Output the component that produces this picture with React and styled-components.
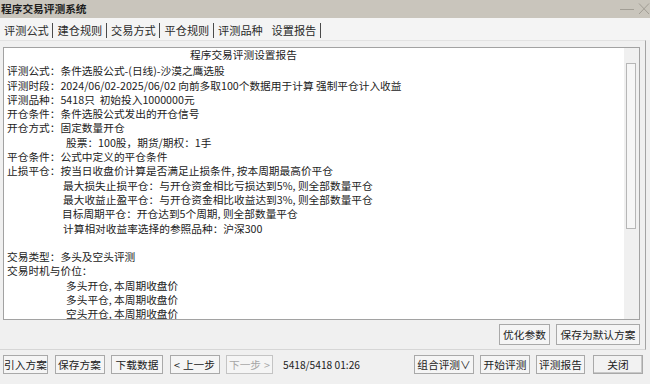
import React from "react";
import styled, { createGlobalStyle } from "styled-components";

const GlobalStyle = createGlobalStyle`
  html, body {
    margin: 0;
    padding: 0;
    background: #f0f0f0;
  }
  body {
    font-family: "Noto Sans CJK SC", "Liberation Sans", sans-serif;
  }
`;

const Window = styled.div`
  width: 650px;
  height: 384px;
  display: flex;
  flex-direction: column;
  overflow: hidden;
  background: #f0f0f0;
  color: #1e1e1e;
  font-size: 10.7px;
`;

const TitleBar = styled.div`
  height: 18px;
  flex: none;
  display: flex;
  align-items: center;
  justify-content: space-between;
  background: #c9c5bc;
  padding-left: 1px;
`;

const Title = styled.span`
  font-weight: bold;
  line-height: 18px;
  color: #1c1c1c;
`;

const TabBar = styled.div`
  height: 22px;
  flex: none;
  display: flex;
  align-items: center;
  padding-left: 4px;
  background: #f4f4f4;
  font-size: 11.2px;
  color: #2a2a2a;
`;

const Tab = styled.span`
  width: 49px;
  height: 15px;
  line-height: 15px;
  margin-top: 2px;
  margin-right: 4.5px;
  white-space: nowrap;
  box-sizing: border-box;
  border-right: ${(p) => (p.$bar ? "1.5px solid #4a4a4a" : "1.5px solid transparent")};
`;

const Panel = styled.div`
  flex: none;
  height: 310px;
  box-sizing: border-box;
  display: flex;
  flex-direction: column;
  margin-right: 4px;
  padding: 6px 5px 0 3px;
  border-top: 1px solid #e2e2e2;
  border-right: 1px solid #a4a4a4;
  border-bottom: 1px solid #d6d6d6;
`;

const Report = styled.div`
  height: 273px;
  flex: none;
  box-sizing: border-box;
  display: flex;
  border: 1px solid #a2a2a2;
  background: #fff;
`;

const ReportText = styled.div`
  flex: 1;
  overflow: hidden;
  padding-left: 3px;
  line-height: 14.3px;
  white-space: pre;
  color: #222;
`;

const ReportTitle = styled.div`
  padding-left: 183px;
  margin-bottom: 2px;
`;

const Line = styled.div`
  height: 14.3px;
  padding-left: ${(p) => p.$indent || 0}px;
`;

const ScrollTrack = styled.div`
  width: 15px;
  flex: none;
  background: #f0f0f0;
  padding-top: 15px;
  box-sizing: border-box;
`;

const ScrollThumb = styled.div`
  width: 10px;
  height: 166px;
  margin-left: 2px;
  box-sizing: border-box;
  border: 1px solid #b6b6b6;
  background: #f6f6f6;
`;

const ActionRow = styled.div`
  display: flex;
  justify-content: flex-end;
  gap: 6px;
  padding-top: 3.5px;
`;

const Footer = styled.div`
  flex: 1;
  display: flex;
  align-items: flex-start;
  padding: 5px 7px 0 3px;
`;

const Group = styled.div`
  display: flex;
  gap: ${(p) => p.$gap || 6.5}px;
`;

const Status = styled.span`
  margin-left: 10px;
  line-height: 19px;
  font-size: 10.2px;
  color: #222;
  flex: 1;
`;

const Btn = styled.button`
  width: ${(p) => p.$w}px;
  height: ${(p) => p.$h || 19}px;
  padding: 0;
  margin-left: ${(p) => p.$ml || 0}px;
  box-sizing: border-box;
  display: flex;
  align-items: center;
  justify-content: center;
  gap: 3px;
  font: inherit;
  font-size: 10.7px;
  white-space: nowrap;
  color: ${(p) => (p.disabled ? "#a6a6a6" : "#222")};
  background: ${(p) => (p.$raised ? "#f2f2f2" : "#f5f5f5")};
  border: 1px solid ${(p) => (p.disabled ? "#c4c4c4" : "#a9a9a9")};
  box-shadow: ${(p) => (p.$raised ? "inset -1px -1px 0 #c8c8c8" : "none")};
`;

const lines = [
  { t: "评测公式：条件选股公式-(日线)-沙漠之鹰选股" },
  { t: "评测时段：2024/06/02-2025/06/02 向前多取100个数据用于计算 强制平仓计入收益" },
  { t: "评测品种：5418只  初始投入1000000元" },
  { t: "开仓条件：条件选股公式发出的开仓信号" },
  { t: "开仓方式：固定数量开仓" },
  { t: "股票：100股，期货/期权：1手", indent: 59 },
  { t: "平仓条件：公式中定义的平仓条件" },
  { t: "止损平仓：按当日收盘价计算是否满足止损条件, 按本周期最高价平仓" },
  { t: "最大损失止损平仓：与开仓资金相比亏损达到5%, 则全部数量平仓", indent: 56 },
  { t: "最大收益止盈平仓：与开仓资金相比收益达到3%, 则全部数量平仓", indent: 56 },
  { t: "目标周期平仓：开仓达到5个周期, 则全部数量平仓", indent: 55 },
  { t: "计算相对收益率选择的参照品种：沪深300", indent: 56 },
  { t: "" },
  { t: "交易类型：多头及空头评测" },
  { t: "交易时机与价位：" },
  { t: "多头开仓, 本周期收盘价", indent: 59 },
  { t: "多头平仓, 本周期收盘价", indent: 59 },
  { t: "空头开仓, 本周期收盘价", indent: 59 },
];

const tabs = ["评测公式", "建仓规则", "交易方式", "平仓规则", "评测品种", "设置报告"];

const WinControls = () => (
  <svg width="31" height="18" viewBox="0 0 31 18">
    <line x1="1" y1="9.5" x2="15" y2="9.5" stroke="#a29e95" strokeWidth="1" />
    <path d="M20 3.5 L30 14 M30 3.5 L20 14" stroke="#a29e95" strokeWidth="1" fill="none" />
  </svg>
);

export default function App() {
  return (
    <>
      <GlobalStyle />
      <Window>
        <TitleBar>
          <Title>程序交易评测系统</Title>
          <WinControls />
        </TitleBar>

        <TabBar>
          {tabs.map((name, i) => (
            <Tab key={name} $bar={i !== 4}>
              {name}
            </Tab>
          ))}
        </TabBar>

        <Panel>
          <Report>
            <ReportText>
              <ReportTitle>程序交易评测设置报告</ReportTitle>
              {lines.map((l, i) => (
                <Line key={i} $indent={l.indent}>
                  {l.t}
                </Line>
              ))}
            </ReportText>
            <ScrollTrack>
              <ScrollThumb />
            </ScrollTrack>
          </Report>
          <ActionRow>
            <Btn $w={51} $h={21}>优化参数</Btn>
            <Btn $w={84} $h={21}>保存为默认方案</Btn>
          </ActionRow>
        </Panel>

        <Footer>
          <Group>
            <Btn $w={45}>引入方案</Btn>
            <Btn $w={50}>保存方案</Btn>
            <Btn $w={52}>下载数据</Btn>
            <Btn $w={50}>
              <span>&lt;</span>
              <span>上一步</span>
            </Btn>
            <Btn $w={47} disabled>
              <span>下一步</span>
              <span>&gt;</span>
            </Btn>
          </Group>
          <Status>5418/5418 01:26</Status>
          <Group $gap={6}>
            <Btn $w={60}>组合评测∨</Btn>
            <Btn $w={50}>开始评测</Btn>
            <Btn $w={49}>评测报告</Btn>
            <Btn $w={50} $ml={2} $raised>
              关闭
            </Btn>
          </Group>
        </Footer>
      </Window>
    </>
  );
}
